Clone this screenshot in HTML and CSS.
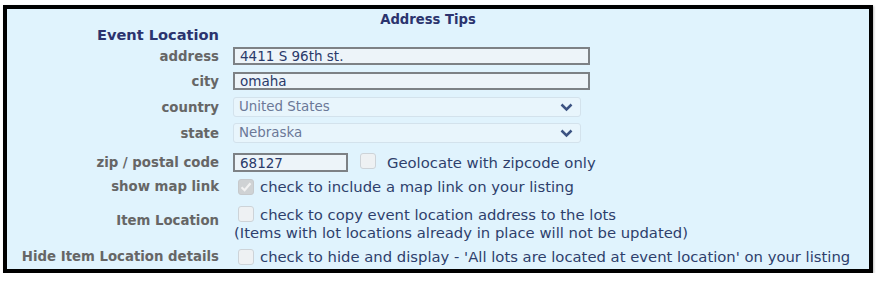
FILE: index.html
```html
<!DOCTYPE html>
<html>
<head>
<meta charset="utf-8">
<link rel="stylesheet" href="styles.css">
</head>
<body>
<div class="panel">
  <div class="tips">Address Tips</div>
  <div class="row row-event"><div class="section">Event Location</div></div>
  <div class="row row-address">
    <div class="label">address</div>
    <div class="value"><span class="textbox wide">4411 S 96th st.</span></div>
  </div>
  <div class="row row-city">
    <div class="label">city</div>
    <div class="value"><span class="textbox wide">omaha</span></div>
  </div>
  <div class="row row-country">
    <div class="label">country</div>
    <div class="value"><span class="select">United States<svg class="chev" viewBox="0 0 13 9" width="13" height="9"><path d="M1.5 1.5 L6.5 6.5 L11.5 1.5" fill="none" stroke="#3c5382" stroke-width="2.5"/></svg></span></div>
  </div>
  <div class="row row-state">
    <div class="label">state</div>
    <div class="value"><span class="select">Nebraska<svg class="chev" viewBox="0 0 13 9" width="13" height="9"><path d="M1.5 1.5 L6.5 6.5 L11.5 1.5" fill="none" stroke="#3c5382" stroke-width="2.5"/></svg></span></div>
  </div>
  <div class="row row-zip">
    <div class="label">zip / postal code</div>
    <div class="value zipval"><span class="textbox zip">68127</span><span class="cb cb-zip"></span><span class="cbtext">Geolocate with zipcode only</span></div>
  </div>
  <div class="row row-map">
    <div class="label">show map link</div>
    <div class="value"><span class="cb checked"><svg viewBox="0 0 16 16" width="16" height="16"><path d="M3.5 8.2 L6.6 11.2 L12.5 4.2" fill="none" stroke="#f2f2f2" stroke-width="2.2"/></svg></span><span class="cbtext">check to include a map link on your listing</span></div>
  </div>
  <div class="row row-item">
    <div class="label label-item">Item Location</div>
    <div class="value block">
      <div class="line"><span class="cb"></span><span class="cbtext">check to copy event location address to the lots</span></div>
      <div class="line note">(Items with lot locations already in place will not be updated)</div>
    </div>
  </div>
  <div class="row row-hide">
    <div class="label">Hide Item Location details</div>
    <div class="value"><span class="cb"></span><span class="cbtext">check to hide and display - 'All lots are located at event location' on your listing</span></div>
  </div>
</div>
</body>
</html>
```

FILE: styles.css
```css
html, body {
  margin: 0;
  padding: 0;
  background: #ffffff;
}

body {
  font-family: "DejaVu Sans", Verdana, sans-serif;
}

.panel {
  margin: 5px 0 0 3px;
  width: 870px;
  height: 268px;
  box-sizing: border-box;
  border: 4px solid #000;
  background: #e0f3fd;
  display: flex;
  flex-direction: column;
  box-shadow: 1px 1px 2px rgba(0,0,0,0.25);
}

.tips {
  height: 20px;
  line-height: 22px;
  text-align: center;
  padding-right: 20px;
  font-size: 13.2px;
  font-weight: bold;
  color: #2b336e;
}

.row {
  display: grid;
  grid-template-columns: 212px 1fr;
  column-gap: 14px;
  align-items: center;
}

.row-event { height: 12px; }
.row-address { height: 18px; margin-top: 6px; }
.row-city { height: 18px; margin-top: 7px; }
.row-country { height: 20px; margin-top: 7px; }
.row-state { height: 20px; margin-top: 6px; }
.row-zip { height: 19px; margin-top: 10px; }
.row-map { height: 16px; margin-top: 6px; }
.row-item { height: 36px; margin-top: 11px; }
.row-hide { height: 16px; margin-top: 7px; }

.section {
  text-align: right;
  font-size: 14.6px;
  line-height: 12px;
  font-weight: bold;
  color: #2b336e;
}

.label {
  text-align: right;
  font-size: 13.3px;
  font-weight: bold;
  color: #666666;
  white-space: nowrap;
}

.label-item {
  padding-bottom: 6px;
}

.value {
  display: flex;
  align-items: center;
  font-size: 14.8px;
  color: #2e3f6c;
  white-space: nowrap;
}

.value.block {
  display: block;
  align-self: stretch;
}

.line {
  display: flex;
  align-items: center;
  height: 18px;
}

.note {
  padding-left: 1px;
}

.textbox {
  box-sizing: border-box;
  height: 18px;
  border: 2px solid #7d8185;
  background: #edf4f9;
  font-size: 13.5px;
  line-height: 14px;
  padding-left: 5px;
  color: #2a3a6a;
}

.textbox.wide { width: 357px; }
.textbox.zip { width: 115px; height: 19px; line-height: 16px; align-self: flex-end; }

.select {
  box-sizing: border-box;
  width: 348px;
  height: 20px;
  border: 1px solid #d3e2ec;
  border-radius: 3px;
  background: #e8f5fc;
  font-size: 13.4px;
  line-height: 18px;
  padding-left: 5px;
  color: #6b7897;
  display: flex;
  align-items: center;
  justify-content: space-between;
  padding-right: 7px;
}

.chev { display: block; }

.zipval { align-items: flex-start; }

.cb {
  box-sizing: border-box;
  width: 16px;
  height: 16px;
  border: 1px solid #cdd3d8;
  border-radius: 3px;
  background: #eef1f3;
  margin-left: 5px;
  margin-right: 6px;
  flex: none;
}

.cb-zip {
  margin-left: 12px;
  margin-right: 11px;
}

.cb.checked {
  background: #cfd2d4;
  border-color: #c6c9cc;
  position: relative;
}

.cb.checked svg {
  position: absolute;
  left: -1px;
  top: -1px;
}

.zipval .cbtext {
  line-height: 19px;
}
```
